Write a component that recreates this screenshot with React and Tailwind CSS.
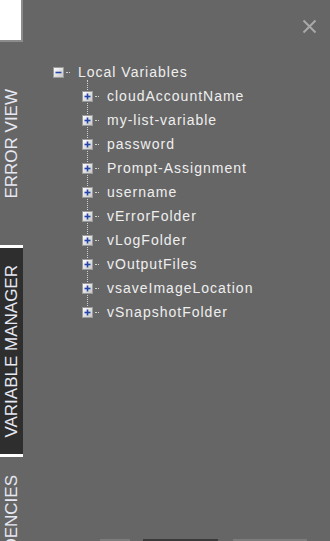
import React from 'react';

const variables = [
  'cloudAccountName',
  'my-list-variable',
  'password',
  'Prompt-Assignment',
  'username',
  'vErrorFolder',
  'vLogFolder',
  'vOutputFiles',
  'vsaveImageLocation',
  'vSnapshotFolder',
];

const ToggleBox = ({ open }) => (
  <svg width="11" height="11" viewBox="0 0 11 11" className="shrink-0">
    <defs>
      <linearGradient id={open ? 'gm' : 'gp'} x1="0" y1="0" x2="1" y2="1">
        <stop offset="0" stopColor="#ffffff" />
        <stop offset="1" stopColor="#c4c4c4" />
      </linearGradient>
    </defs>
    <rect x="0.5" y="0.5" width="10" height="10" fill={`url(#${open ? 'gm' : 'gp'})`} stroke="#9a9a9a" />
    <path d="M2.5 5.5h6" stroke="#2546a8" strokeWidth="1.6" />
    {!open && <path d="M5.5 2.5v6" stroke="#2546a8" strokeWidth="1.6" />}
  </svg>
);

const Dots = () => <div className="mx-[2px] w-[4px] border-t border-dotted border-[#d0d0d0]" />;

const Tab = ({ label, className }) => (
  <div className={`flex w-[23px] shrink-0 items-center justify-center ${className}`}>
    <span className="whitespace-nowrap text-[17px] leading-none text-[#e6e8f2] [writing-mode:vertical-rl] rotate-180">
      {label}
    </span>
  </div>
);

export default function App() {
  return (
    <div
      className="flex h-[541px] w-[330px] overflow-hidden bg-[#666666]"
      style={{ fontFamily: '"Liberation Sans", Arial, sans-serif' }}
    >
      <div className="flex w-[23px] shrink-0 flex-col">
        <div className="h-[42px] w-[23px] shrink-0 border-b-2 border-r-2 border-[#8c8c8c] bg-white" />
        <Tab label="ERROR VIEW" className="h-[203px]" />
        <Tab label="VARIABLE MANAGER" className="h-[212px] border-y-[3px] border-white bg-[#2e2e2e]" />
        <Tab label="DEPENDENCIES" className="h-[170px]" />
      </div>

      <div className="relative flex flex-1 flex-col">
        <button className="absolute right-[13px] top-[19px] h-[15px] w-[15px]" aria-label="Close">
          <svg width="15" height="15" viewBox="0 0 15 15">
            <path d="M1.5 1.5l12 12M13.5 1.5l-12 12" stroke="#a9a9a9" strokeWidth="2" />
          </svg>
        </button>

        <div className="relative ml-[30px] mt-[60px] text-[14px] tracking-[1px] text-[#efefef]">
          <div className="absolute left-[34px] top-[20px] h-[228px] border-l border-dotted border-[#cfcfcf]" />
          <div className="flex h-[24px] items-center">
            <ToggleBox open />
            <Dots />
            <span className="ml-[6px]">Local Variables</span>
          </div>
          {variables.map((name) => (
            <div key={name} className="relative flex h-[24px] items-center pl-[29px]">
              <ToggleBox />
              <Dots />
              <span className="ml-[6px]">{name}</span>
            </div>
          ))}
        </div>

        <div className="flex-1" />
        <div className="flex h-[2px] shrink-0">
          <div className="w-[77px]" />
          <div className="w-[30px] bg-[#7b7b7b]" />
          <div className="w-[13px]" />
          <div className="w-[75px] bg-[#3a3a3a]" />
          <div className="w-[15px]" />
          <div className="w-[74px] bg-[#7b7b7b]" />
        </div>
      </div>
    </div>
  );
}
